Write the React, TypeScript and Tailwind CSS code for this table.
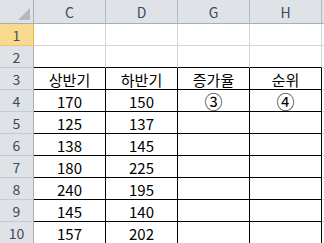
import React from "react"

const COLS = ["C", "D", "G", "H"]

// rows 1..10, values for C, D, G, H
const ROWS: string[][] = [
  ["", "", "", ""],
  ["", "", "", ""],
  ["상반기", "하반기", "증가율", "순위"],
  ["170", "150", "③", "④"],
  ["125", "137", "", ""],
  ["138", "145", "", ""],
  ["180", "225", "", ""],
  ["240", "195", "", ""],
  ["145", "140", "", ""],
  ["157", "202", "", ""],
]

const font = "font-['Noto_Sans_CJK_KR','Malgun_Gothic',sans-serif]"

const App: React.FC = () => {
  return (
    <div className={`w-[324px] h-[243px] overflow-hidden bg-white ${font}`}>
      <div className="grid grid-cols-[34px_72px_72px_72px_72px_2px] grid-rows-[24px_repeat(10,22px)]">
        {/* column header row */}
        <div className="relative bg-[#dfe3e8] border-r border-b border-[#a9afb7]">
          <div className="absolute right-[3px] bottom-[3px] w-0 h-0 border-l-[12px] border-l-transparent border-b-[12px] border-b-[#b4b9c0]" />
        </div>
        {COLS.map((c) => (
          <div
            key={c}
            className="flex items-center justify-center bg-[#dfe3e8] border-r border-b border-r-[#b4b9c0] border-b-[#a9afb7] text-[14px] text-[#3d4a5a] leading-none"
          >
            {c}
          </div>
        ))}
        <div className="bg-[#dfe3e8] border-b border-[#a9afb7]" />

        {ROWS.map((row, i) => {
          const n = i + 1
          const selected = n === 1
          return (
            <React.Fragment key={n}>
              <div
                className={
                  selected
                    ? "flex items-center justify-center bg-[#f9d98e] border-r border-b border-r-[#e7b94f] border-b-[#efc66b] text-[14px] text-[#475363] leading-none"
                    : "flex items-center justify-center bg-[#dfe3e8] border-r border-b border-r-[#a9afb7] border-b-[#c6cbd1] text-[14px] text-[#3d4a5a] leading-none"
                }
              >
                {n}
              </div>
              {row.map((v, j) => {
                const inTable = n >= 3
                const topOfTable = n === 2
                const circled = v === "③" || v === "④"
                return (
                  <div
                    key={j}
                    className={
                      "flex items-center justify-center pt-[1px] text-black leading-none " +
                      (circled ? "text-[18px] " : "text-[15px] ") +
                      (inTable
                        ? "border-r border-b border-black"
                        : topOfTable
                          ? "border-r border-b border-r-[#d4d4d4] border-b-black"
                          : "border-r border-b border-[#d4d4d4]")
                    }
                  >
                    {v}
                  </div>
                )
              })}
              <div className="border-b border-[#d4d4d4]" />
            </React.Fragment>
          )
        })}
      </div>
    </div>
  )
}

export default App
